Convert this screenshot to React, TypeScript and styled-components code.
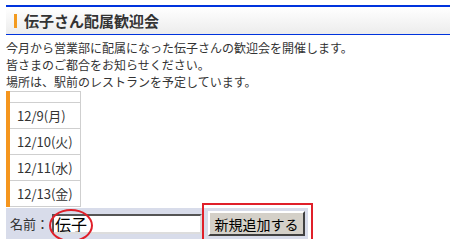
import styled, { createGlobalStyle } from 'styled-components';

const GlobalStyle = createGlobalStyle`
  html, body {
    margin: 0;
    padding: 0;
    background: #fff;
  }
  body {
    font-family: "Noto Sans CJK JP", "Liberation Sans", sans-serif;
    font-size: 12px;
    color: #333;
  }
  * {
    box-sizing: border-box;
  }
`;

const Page = styled.div`
  padding: 5px 0 0 6px;
`;

const Header = styled.h2`
  margin: 0;
  height: 30px;
  display: flex;
  align-items: center;
  gap: 7px;
  padding-left: 8px;
  border-top: 2px solid #0033dd;
  border-bottom: 1px solid #0033dd;
  background: linear-gradient(#ffffff, #ececec);
  font-size: 15px;
  font-weight: bold;
  color: #333;
`;

const Mark = styled.span`
  width: 3px;
  height: 14px;
  background: #f39a1e;
`;

const Body = styled.div`
  margin-top: 4px;
  line-height: 17px;
`;

const Dates = styled.table`
  margin-top: 1px;
  border-left: 4px solid #f5961e;
  border-collapse: collapse;
`;

const Cell = styled.td<{ $empty?: boolean }>`
  width: 69px;
  height: ${(p) => (p.$empty ? '11px' : '26px')};
  padding: 0 7px;
  border: 1px solid #cfcfcf;
  font-size: 13px;
  color: #333;
  white-space: nowrap;
`;

const Form = styled.form`
  margin-top: 1px;
  display: inline-flex;
  align-items: center;
  height: 31px;
  padding: 0 3px 0 4px;
  background: #d8dcea;
  font-size: 13px;
`;

const Label = styled.label`
  margin-right: 3px;
  color: #333;
`;

const NameMark = styled.span`
  position: relative;
  display: inline-block;
`;

const Circle = styled.span`
  position: absolute;
  left: -3px;
  top: -5px;
  width: 44px;
  height: 33px;
  border: 2px solid #e0202a;
  border-radius: 50%;
  pointer-events: none;
`;

const NameInput = styled.input`
  display: block;
  width: 150px;
  height: 20px;
  padding: 0 1px;
  border: 2px solid;
  border-color: #555 #ddd #ddd #555;
  font-family: "Noto Sans CJK JP", sans-serif;
  font-size: 16px;
  color: #000;
  outline: none;
`;

const ButtonFrame = styled.span`
  position: relative;
  margin-left: 6px;
  display: inline-block;
`;

const Box = styled.span`
  position: absolute;
  left: -6px;
  top: -8px;
  right: -8px;
  bottom: -8px;
  border: 2px solid #e0202a;
  pointer-events: none;
`;

const Button = styled.button`
  display: block;
  width: 97px;
  height: 25px;
  padding: 0;
  background: #d4d0c8;
  border: 2px solid;
  border-color: #fff #404040 #404040 #fff;
  font-family: "Noto Sans CJK JP", sans-serif;
  font-size: 14px;
  color: #000;
`;

const dates = ['12/9(月)', '12/10(火)', '12/11(水)', '12/13(金)'];

export default function App() {
  return (
    <Page>
      <GlobalStyle />
      <Header>
        <Mark />
        伝子さん配属歓迎会
      </Header>
      <Body>
        今月から営業部に配属になった伝子さんの歓迎会を開催します。
        <br />
        皆さまのご都合をお知らせください。
        <br />
        場所は、駅前のレストランを予定しています。
      </Body>
      <Dates>
        <tbody>
          <tr>
            <Cell $empty />
          </tr>
          {dates.map((d) => (
            <tr key={d}>
              <Cell>{d}</Cell>
            </tr>
          ))}
        </tbody>
      </Dates>
      <Form onSubmit={(e) => e.preventDefault()}>
        <Label>名前：</Label>
        <NameMark>
          <NameInput defaultValue="伝子" />
          <Circle />
        </NameMark>
        <ButtonFrame>
          <Button type="submit">新規追加する</Button>
          <Box />
        </ButtonFrame>
      </Form>
    </Page>
  );
}
